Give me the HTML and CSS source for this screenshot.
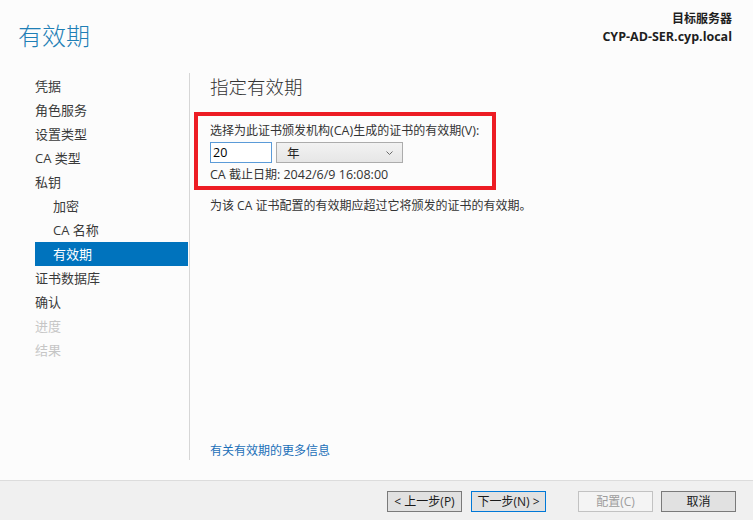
FILE: index.html
```html
<!DOCTYPE html>
<html lang="zh-CN">
<head>
<meta charset="utf-8">
<title>有效期</title>
<link rel="stylesheet" href="styles.css">
</head>
<body>
<div class="window">
  <header class="top">
    <h1 class="title">有效期</h1>
    <div class="server">
      <div>目标服务器</div>
      <div class="host">CYP-AD-SER.cyp.local</div>
    </div>
  </header>
  <div class="main">
    <nav class="nav">
      <ul class="steps">
        <li>凭据</li>
        <li>角色服务</li>
        <li>设置类型</li>
        <li>CA 类型</li>
        <li>私钥</li>
        <li class="sub">加密</li>
        <li class="sub">CA 名称</li>
        <li class="sub active">有效期</li>
        <li>证书数据库</li>
        <li>确认</li>
        <li class="disabled">进度</li>
        <li class="disabled">结果</li>
      </ul>
    </nav>
    <section class="content">
      <h2 class="heading">指定有效期</h2>
      <div class="callout">
        <div class="label">选择为此证书颁发机构<span class="lat">(CA)</span>生成的证书的有效期<span class="lat">(V):</span></div>
        <div class="row">
          <div class="num">20</div>
          <div class="select">
            <span>年</span>
            <svg class="chev" width="7" height="4" viewBox="0 0 7 4"><path d="M0.5 0.5 L3.5 3.5 L6.5 0.5" fill="none" stroke="#6a6a6a" stroke-width="1"/></svg>
          </div>
        </div>
        <div class="date"><span class="lat">CA</span> 截止日期<span class="lat">: 2042/6/9 16:08:00</span></div>
      </div>
      <p class="desc">为该 CA 证书配置的有效期应超过它将颁发的证书的有效期。</p>
      <a class="more">有关有效期的更多信息</a>
    </section>
  </div>
  <footer class="footer">
    <button class="btn">&lt; 上一步(P)</button>
    <button class="btn default">下一步(N) &gt;</button>
    <button class="btn disabled-btn">配置(C)</button>
    <button class="btn">取消</button>
  </footer>
</div>
</body>
</html>
```
FILE: styles.css
```css
* { box-sizing: border-box; }
html, body { margin: 0; padding: 0; }
body {
  width: 753px;
  height: 520px;
  overflow: hidden;
  background: #fcfcfc;
  font-family: "Segoe UI", "Open Sans", "Noto Sans CJK SC", sans-serif;
  font-size: 12px;
  color: #333;
}
.window { width: 753px; height: 520px; display: flex; flex-direction: column; }

.top {
  height: 73px;
  display: flex;
  justify-content: space-between;
  align-items: flex-start;
}
.title {
  margin: 0;
  padding: 19px 0 0 18px;
  font-family: "Noto Sans CJK SC", sans-serif;
  font-weight: 300;
  font-size: 24px;
  line-height: 32px;
  color: #1f7fb6;
}
.server {
  padding: 10px 21px 0 0;
  text-align: right;
  font-weight: 700;
  font-size: 12px;
  line-height: 18px;
  color: #1e1e1e;
}
.server .host { font-size: 12.5px; }

.main {
  height: 407px;
  padding-bottom: 20px;
  display: flex;
}
.nav {
  margin-left: 35px;
  width: 155px;
  border-right: 1px solid #d6d6d6;
}
.steps {
  list-style: none;
  margin: 0;
  padding: 1px 0 0 0;
}
.steps li {
  height: 24px;
  line-height: 24px;
  font-size: 13px;
  color: #3a3a3a;
  margin-right: 1px;
}
.steps li.sub { padding-left: 18px; }
.steps li.active { background: #0073bd; color: #fff; }
.steps li.disabled { color: #c6c6c6; }

.content {
  flex: 1;
  padding-left: 20px;
  display: flex;
  flex-direction: column;
}
.heading {
  margin: 0;
  padding-top: 1px;
  font-family: "Noto Sans CJK SC", sans-serif;
  font-weight: 300;
  font-size: 18.5px;
  line-height: 24px;
  color: #333;
}
.callout {
  margin: 14px 0 0 -16px;
  width: 302px;
  border: 4px solid #ed1c24;
  padding: 6px 0 2px 12px;
}
.lat { font-size: 12.5px; }
.label { line-height: 18px; }
.row { display: flex; gap: 4px; margin-top: 2px; }
.num {
  width: 62px;
  height: 21px;
  border: 1px solid #5b9bd8;
  background: #fff;
  color: #000;
  padding-left: 2px;
  line-height: 19px;
  font-size: 12.5px;
}
.select {
  width: 127px;
  height: 21px;
  border: 1px solid #acacac;
  background: linear-gradient(#f2f2f2, #e6e6e6);
  display: flex;
  align-items: center;
  justify-content: space-between;
  padding: 0 9px 0 10px;
  color: #222;
  font-size: 12.5px;
}
.chev { margin-top: 1px; }
.date { margin-top: 3px; line-height: 18px; }
.desc { margin: 7px 0 0 0; line-height: 18px; }
.more {
  margin-top: auto;
  line-height: 18px;
  color: #1b6fb8;
}

.footer {
  height: 40px;
  border-top: 1px solid #dcdcdc;
  background: #f0f0f0;
  display: flex;
  justify-content: flex-end;
  align-items: flex-start;
  padding: 10px 17px 0 0;
}
.btn {
  width: 75px;
  height: 21px;
  margin: 0;
  padding: 0;
  border: 1px solid #7a7a7a;
  background: #e1e1e1;
  font-family: "Segoe UI", "Open Sans", "Noto Sans CJK SC", sans-serif;
  font-size: 12px;
  line-height: 19px;
  color: #1a1a1a;
}
.btn + .btn { margin-left: 9px; }
.btn.default { border-color: #0078d7; }
.btn.disabled-btn {
  margin-left: 32px;
  border-color: #c2c2c2;
  background: #f4f4f4;
  color: #9d9d9d;
}
.btn.disabled-btn + .btn { margin-left: 8px; }
```
